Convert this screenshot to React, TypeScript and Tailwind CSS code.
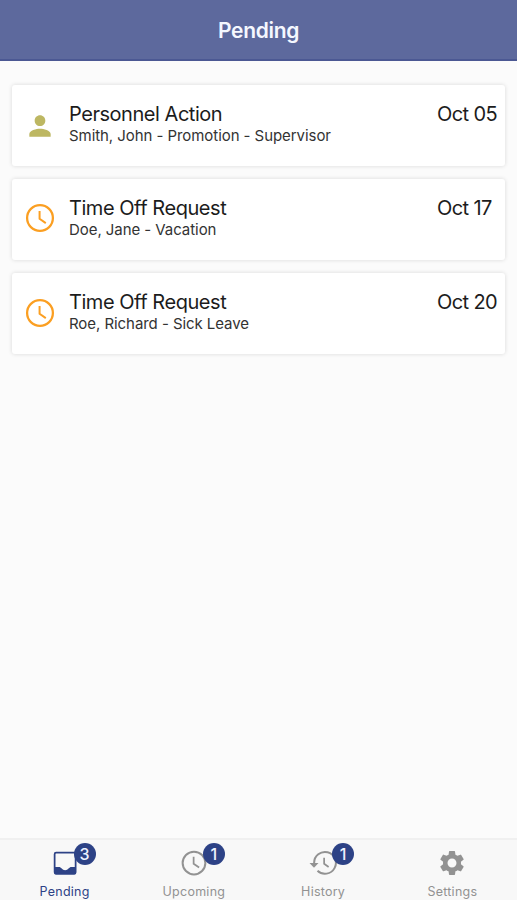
import type { ComponentType } from 'react';
import { MdPerson, MdSettings } from 'react-icons/md';
import clsx from 'clsx';

type Icon = ComponentType<{ className?: string }>;

interface PendingItem {
  title: string;
  detail: string;
  date: string;
  icon: Icon;
  iconClass: string;
}

interface Tab {
  label: string;
  icon: Icon;
  count?: number;
}

function ClockIcon({ className }: { className?: string }) {
  return (
    <svg viewBox="0 0 24 24" fill="none" stroke="currentColor" strokeWidth="1.6" className={className}>
      <circle cx="12" cy="12" r="9.1" />
      <path d="M11.7 7v5.6l4.4 3" strokeWidth="1.4" />
    </svg>
  );
}

function HistoryIcon({ className }: { className?: string }) {
  return (
    <svg viewBox="0 0 24 24" fill="none" stroke="currentColor" strokeWidth="1.6" className={className}>
      <path d="M4.9 13.5V12a8.7 8.7 0 1 1 2.7 6.2" />
      <path d="M1.2 12h7.2l-3.6 3.7z" fill="currentColor" stroke="none" />
      <path d="M12.9 7.8v4.8l3.6 2.6" strokeWidth="1.4" />
    </svg>
  );
}

function InboxIcon({ className }: { className?: string }) {
  return (
    <svg viewBox="0 0 24 24" fill="none" className={className}>
      <rect x="3.7" y="3.7" width="16.8" height="16.8" rx="1.2" stroke="currentColor" strokeWidth="1.4" />
      {/* Tray with the notch */}
      <path
        d="M3.5 15.2h4.3l1.6 1.2a3.1 2.6 0 0 0 5.4 0l1.6-1.2h4.3v4.7a1.3 1.3 0 0 1-1.3 1.3H4.8a1.3 1.3 0 0 1-1.3-1.3z"
        fill="currentColor"
      />
    </svg>
  );
}

const items: PendingItem[] = [
  {
    title: 'Personnel Action',
    detail: 'Smith, John - Promotion - Supervisor',
    date: 'Oct 05',
    icon: MdPerson,
    iconClass: 'size-8 mr-px text-[#bdb762]',
  },
  {
    title: 'Time Off Request',
    detail: 'Doe, Jane - Vacation',
    date: 'Oct 17',
    icon: ClockIcon,
    iconClass: 'size-[34px] -mt-[3px] mr-px text-[#fb9f22]',
  },
  {
    title: 'Time Off Request',
    detail: 'Roe, Richard - Sick Leave',
    date: 'Oct 20',
    icon: ClockIcon,
    iconClass: 'size-[34px] -mt-px mr-px text-[#fb9f22]',
  },
];

const tabs: Tab[] = [
  { label: 'Pending', icon: InboxIcon, count: 3 },
  { label: 'Upcoming', icon: ClockIcon, count: 1 },
  { label: 'History', icon: HistoryIcon, count: 1 },
  { label: 'Settings', icon: MdSettings },
];

function PendingCard({ item }: { item: PendingItem }) {
  const Icon = item.icon;

  return (
    <li className="flex h-[81px] rounded-[3px] bg-white shadow-[0_0_4px_rgba(0,0,0,0.14)]">
      <div className="flex w-[57px] shrink-0 items-center justify-center">
        <Icon className={item.iconClass} />
      </div>
      <div className="min-w-0 flex-1 pt-[17px]">
        <h2 className="text-[20px] leading-6 tracking-[-0.46px] text-[#1c1c1c]">{item.title}</h2>
        <p className="text-[15px] leading-5 tracking-[-0.06px] text-[#333]">{item.detail}</p>
      </div>
      <time className="w-[68px] shrink-0 pt-[17px] text-[20px] leading-6 tracking-[-0.6px] whitespace-nowrap text-[#1c1c1c]">
        {item.date}
      </time>
    </li>
  );
}

function TabButton({ tab, active }: { tab: Tab; active: boolean }) {
  const Icon = tab.icon;

  return (
    <button
      className={clsx(
        'flex flex-1 flex-col items-center pt-2',
        active ? 'text-[#2d4286]' : 'text-[#929292]'
      )}
    >
      <span className="relative">
        <Icon className="size-[30px]" />
        {/* Count badge */}
        {tab.count && (
          <span className="absolute -top-[5px] left-[24px] flex size-[22px] items-center justify-center rounded-full bg-[#2d4286] text-[16px] leading-none font-medium text-[#eef2ff]">
            {tab.count}
          </span>
        )}
      </span>
      <span className="mt-1.5 text-[12.5px] leading-4 tracking-[0.25px]">{tab.label}</span>
    </button>
  );
}

export default function App() {
  return (
    <div className="flex h-[900px] w-full flex-col bg-[#fbfbfb] font-['Inter',sans-serif]">
      <header className="flex h-[61px] shrink-0 items-center justify-center border-b-2 border-[#4b5893] bg-[#5d699d] pt-0.5">
        <h1 className="text-[21px] font-semibold tracking-[-0.3px] text-[#f5f8ff]">Pending</h1>
      </header>

      <main className="flex-1 px-3 pt-6">
        <ul className="flex flex-col gap-[13px]">
          {items.map((item) => (
            <PendingCard key={item.date} item={item} />
          ))}
        </ul>
      </main>

      <nav className="flex h-[62px] shrink-0 border-t-2 border-[#f0f0f0] bg-[#f8f8f8]">
        {tabs.map((tab) => (
          <TabButton key={tab.label} tab={tab} active={tab.label === 'Pending'} />
        ))}
      </nav>
    </div>
  );
}
